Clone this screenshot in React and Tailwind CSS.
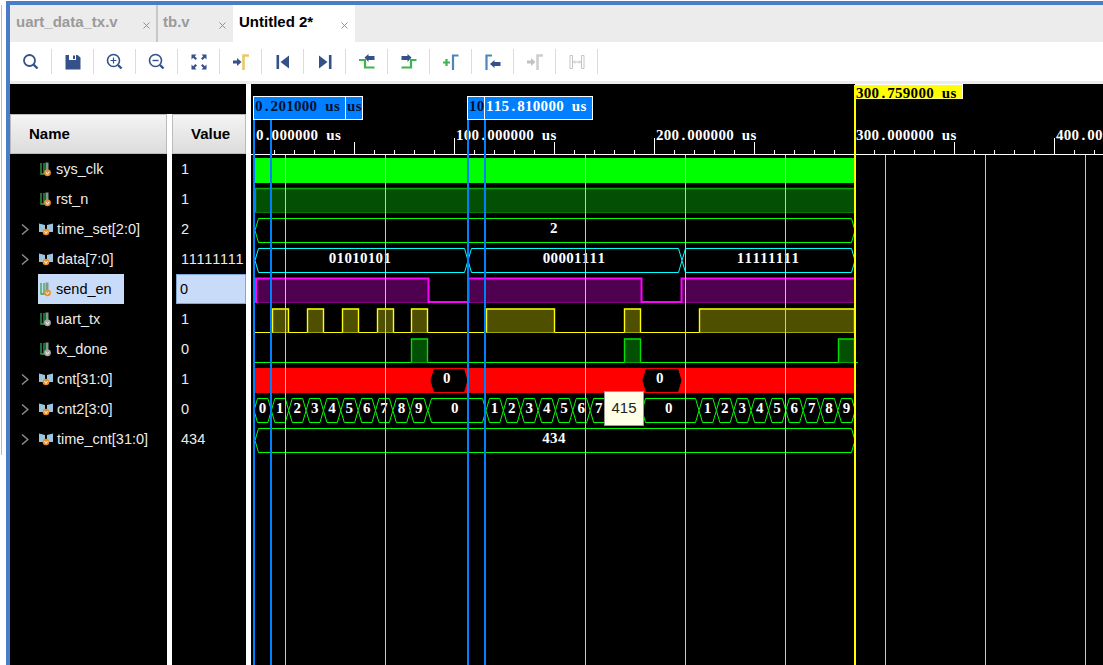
import { X } from 'lucide-react';

const NAVY = '#34518a';
const GREEN = '#3cb54a';

const ZoomFit = () => (
  <svg width="17" height="17" viewBox="0 0 17 17">
    <circle cx="7.5" cy="7.5" r="5.5" fill="none" stroke={NAVY} strokeWidth="1.8" />
    <path d="M11.5 11.5L15.5 15.5" stroke={NAVY} strokeWidth="2.4" />
  </svg>
);

const Save = () => (
  <svg width="16" height="16" viewBox="0 0 16 16">
    <path d="M0.5 1H12.5L15.5 3.5V15.5H0.5Z" fill={NAVY} />
    <rect x="4" y="1" width="7" height="5" fill="#fff" />
    <rect x="8" y="1.5" width="2" height="3.5" fill={NAVY} />
  </svg>
);

const ZoomIn = () => (
  <svg width="17" height="17" viewBox="0 0 17 17">
    <circle cx="7.5" cy="7.5" r="6" fill="none" stroke={NAVY} strokeWidth="1.6" />
    <path d="M4.5 7.5H10.5M7.5 4.5V10.5" stroke={NAVY} strokeWidth="1.2" />
    <path d="M12 12L15.5 15.5" stroke={NAVY} strokeWidth="2.4" />
  </svg>
);

const ZoomOut = () => (
  <svg width="17" height="17" viewBox="0 0 17 17">
    <circle cx="7.5" cy="7.5" r="6" fill="none" stroke={NAVY} strokeWidth="1.6" />
    <path d="M4.5 7.5H10.5" stroke={NAVY} strokeWidth="1.4" />
    <path d="M12 12L15.5 15.5" stroke={NAVY} strokeWidth="2.4" />
  </svg>
);

const FullScreen = () => (
  <svg width="16" height="16" viewBox="0 0 16 16" fill={NAVY}>
    <path d="M0.5 0.5H5.5L3.8 2.2L6 4.4L4.4 6L2.2 3.8L0.5 5.5Z" />
    <path d="M15.5 0.5H10.5L12.2 2.2L10 4.4L11.6 6L13.8 3.8L15.5 5.5Z" />
    <path d="M0.5 15.5H5.5L3.8 13.8L6 11.6L4.4 10L2.2 12.2L0.5 10.5Z" />
    <path d="M15.5 15.5H10.5L12.2 13.8L10 11.6L11.6 10L13.8 12.2L15.5 10.5Z" />
  </svg>
);

const GoToCursor = ({ arrow = NAVY, bar = '#e8c968' }) => (
  <svg width="16" height="16" viewBox="0 0 16 16">
    <path d="M0 6.5H4V4L8.5 8L4 12V9.5H0Z" fill={arrow} />
    <path d="M10.5 16V1.5H16" fill="none" stroke={bar} strokeWidth="2.6" />
  </svg>
);

const First = () => (
  <svg width="14" height="16" viewBox="0 0 14 16" fill={NAVY}>
    <rect x="0.5" y="1" width="2.6" height="14" />
    <path d="M13 1.5V14.5L4.5 8Z" />
  </svg>
);

const Last = () => (
  <svg width="14" height="16" viewBox="0 0 14 16" fill={NAVY}>
    <rect x="10.9" y="1" width="2.6" height="14" />
    <path d="M1 1.5V14.5L9.5 8Z" />
  </svg>
);

const PrevEdge = () => (
  <svg width="16" height="16" viewBox="0 0 16 16">
    <path d="M0 6H6V13.5H15.5" fill="none" stroke={GREEN} strokeWidth="2.2" />
    <path d="M5.5 3.5L9.5 0V2H15.5V6H9.5V8Z" fill={NAVY} />
  </svg>
);

const NextEdge = () => (
  <svg width="16" height="16" viewBox="0 0 16 16">
    <path d="M0.5 13.5H10V6H15.5" fill="none" stroke={GREEN} strokeWidth="2.2" />
    <path d="M10.5 3.5L6.5 0V2H0.5V6H6.5V8Z" fill={NAVY} />
  </svg>
);

const AddMarker = () => (
  <svg width="16" height="16" viewBox="0 0 16 16">
    <path d="M0 8.5H7M3.5 5V12" stroke={GREEN} strokeWidth="2.2" />
    <path d="M10 16V1.5H15.5" fill="none" stroke="#4a86b8" strokeWidth="2.2" />
  </svg>
);

const PrevMarker = () => (
  <svg width="16" height="16" viewBox="0 0 16 16">
    <path d="M1.5 16V1.5H7" fill="none" stroke="#4a86b8" strokeWidth="2.2" />
    <path d="M5 10L9.5 6V8H15.5V12H9.5V14Z" fill={NAVY} />
  </svg>
);

const Swap = () => (
  <svg width="16" height="16" viewBox="0 0 16 16">
    <path d="M1 1.5H3.5V14.5H1ZM12.5 1.5H15V14.5H12.5Z" fill="#fff" stroke="#c4c4c4" />
    <path d="M4.5 8H11.5M6 6.5L4.5 8L6 9.5M10 6.5L11.5 8L10 9.5" fill="none" stroke="#c4c4c4" />
  </svg>
);

const toolIcons = [
  <ZoomFit />,
  <Save />,
  <ZoomIn />,
  <ZoomOut />,
  <FullScreen />,
  <GoToCursor />,
  <First />,
  <Last />,
  <PrevEdge />,
  <NextEdge />,
  <AddMarker />,
  <PrevMarker />,
  <GoToCursor arrow="#c2c2c2" bar="#cfcfcf" />,
  <Swap />,
];

const signals = [
  { name: 'sys_clk', value: '1', type: 'bit' },
  { name: 'rst_n', value: '1', type: 'bit' },
  { name: 'time_set[2:0]', value: '2', type: 'bus' },
  { name: 'data[7:0]', value: '11111111', type: 'bus' },
  { name: 'send_en', value: '0', type: 'bit', selected: true },
  { name: 'uart_tx', value: '1', type: 'bit', output: true },
  { name: 'tx_done', value: '0', type: 'bit', output: true },
  { name: 'cnt[31:0]', value: '1', type: 'bus' },
  { name: 'cnt2[3:0]', value: '0', type: 'bus' },
  { name: 'time_cnt[31:0]', value: '434', type: 'bus' },
];

const BitIcon = ({ output }) => (
  <svg width="12" height="15" viewBox="0 0 12 15" className="shrink-0">
    <path d="M1 1V12H4V1" fill="none" stroke="#2fa84f" strokeWidth="1.3" />
    <rect x="5.5" y="0.5" width="3" height="8" fill="#7f9a8a" />
    <circle cx="7.5" cy="10.8" r="3.4" fill={output ? '#a8a8a8' : '#e8912c'} />
    <path d="M6 9.8L7.5 12.3L9 9.8" fill="none" stroke="#fff" strokeWidth="0.8" />
  </svg>
);

const BusIcon = () => (
  <svg width="14" height="13" viewBox="0 0 14 13" className="shrink-0">
    <path d="M0 0.5L6 2V9H0ZM14 0.5L8 2V9H14Z" fill="#9cc4dc" />
    <circle cx="7" cy="9" r="3.3" fill="#e8912c" />
    <path d="M5.5 8L7 10.5L8.5 8" fill="none" stroke="#fff" strokeWidth="0.8" />
  </svg>
);

const Chevron = () => (
  <svg width="8" height="11" viewBox="0 0 8 11">
    <path d="M1 0.5L6.8 5.5L1 10.5" fill="none" stroke="#8a8a8a" strokeWidth="1.5" />
  </svg>
);

const CELL = 7.8;
const nudge = { '.': 2, s: 1, i: 1, t: 1 };

// half-width bitmap look: every character sits in its own fixed cell
const WaveText = ({ x, y, fill = '#fff', center, children }) => {
  const str = String(children);
  const start = center ? x - (str.length * CELL) / 2 : x;
  const xs = str.split('').map((c, i) => (start + i * CELL + (nudge[c] || 0)).toFixed(1)).join(' ');
  return (
    <text x={xs} y={y} fill={fill} fontSize="15" fontWeight="700" fontFamily="'Liberation Serif', serif">
      {str}
    </text>
  );
};

// one bus value: hexagon between two crossing points
const Hex = ({ x0, x1, top, stroke, inset = 3.5 }) => {
  const bot = top + 24;
  const mid = top + 12;
  return (
    <path
      d={`M${x0} ${mid}L${x0 + inset} ${top}H${x1 - inset}L${x1} ${mid}L${x1 - inset} ${bot}H${x0 + inset}Z`}
      fill="#000"
      stroke={stroke}
      strokeWidth="1"
    />
  );
};

const DigitRun = ({ start, first, count, skip = [] }) => {
  const step = 17.36;
  const items = [];
  for (let i = 0; i < count; i++) {
    const x0 = start + i * step;
    items.push(<Hex key={i} x0={x0} x1={x0 + step} top={398.5} stroke="#00ff00" />);
    if (!skip.includes(i)) {
      items.push(
        <WaveText key={`t${i}`} x={x0 + step / 2} y={413} center>
          {first + i}
        </WaveText>
      );
    }
  }
  return <g>{items}</g>;
};

const Pulses = ({ ranges, top, stroke, fill }) => (
  <g>
    {ranges.map(([x0, x1]) => (
      <g key={x0}>
        <rect x={x0} y={top} width={x1 - x0} height={24} fill={fill} />
        <path d={`M${x0 + 0.5} ${top + 24}V${top + 0.5}H${x1 - 0.5}V${top + 24}`} fill="none" stroke={stroke} strokeWidth="1.4" />
      </g>
    ))}
  </g>
);

const minorTicks = [];
for (let x = 254; x < 1103; x += 20) minorTicks.push(x);

const gridLines = [285, 385, 485, 585, 685, 785, 885, 985, 1085];

const Waves = () => (
  <svg viewBox="251 84 852 581" width="852" height="581" className="block">
    {/* ruler */}
    <path d="M251 154.5H1103" stroke="#fff" />
    {minorTicks.map((x) => {
      const major = (x - 254) % 200 === 0;
      const half = (x - 254) % 100 === 0;
      const top = major ? 138 : half ? 142 : 150;
      return <path key={x} d={`M${x + 0.5} ${top}V154`} stroke="#fff" />;
    })}
    <WaveText x={256} y={140}>0.000000 us</WaveText>
    <WaveText x={456} y={140}>100.000000 us</WaveText>
    <WaveText x={656} y={140}>200.000000 us</WaveText>
    <WaveText x={856} y={140}>300.000000 us</WaveText>
    <WaveText x={1056} y={140}>400.000000 us</WaveText>

    {/* sys_clk, rst_n */}
    <rect x={255} y={158} width={600} height={25} fill="#00ff00" />
    <rect x={255} y={188} width={600} height={25} fill="#034f03" />
    <path d="M255.5 213V188.5H855" fill="none" stroke="#0aa80a" strokeWidth="1.4" />
    <path d="M255 212.5H855" stroke="#047a04" />

    {/* time_set, data */}
    <Hex x0={255} x1={855} top={218.5} stroke="#00ff00" />
    <WaveText x={554} y={233} center>2</WaveText>
    <Hex x0={255} x1={468} top={248.5} stroke="#00ffff" />
    <Hex x0={468} x1={682} top={248.5} stroke="#00ffff" />
    <Hex x0={682} x1={855} top={248.5} stroke="#00ffff" />
    <WaveText x={360} y={263} center>01010101</WaveText>
    <WaveText x={574} y={263} center>00001111</WaveText>
    <WaveText x={768} y={263} center>11111111</WaveText>

    {/* send_en */}
    <rect x={256} y={279} width={172} height={24} fill="#4f004f" />
    <rect x={469} y={279} width={172} height={24} fill="#4f004f" />
    <rect x={682} y={279} width={173} height={24} fill="#4f004f" />
    <path d="M256 302.5H855" stroke="#800080" />
    <path
      d="M256 303V278.5H428.5V302H468.5V278.5H641.5V302H681.5V278.5H855"
      fill="none"
      stroke="#ff00ff"
      strokeWidth="2"
    />

    {/* uart_tx */}
    <path d="M255 332.5H855" stroke="#ffff00" />
    <Pulses
      top={308.5}
      stroke="#ffff00"
      fill="#4f4f00"
      ranges={[
        [272, 289],
        [307, 324],
        [342, 359],
        [377, 394],
        [411, 428],
        [486, 555],
        [624, 641],
        [699, 855],
      ]}
    />

    {/* tx_done */}
    <path d="M255 362.5H858" stroke="#00ff00" />
    <Pulses
      top={338.5}
      stroke="#00e000"
      fill="#034f03"
      ranges={[
        [411, 428],
        [624, 641],
        [838, 855],
      ]}
    />

    {/* cnt */}
    <rect x={255} y={368} width={600} height={25} fill="#ff0000" />
    <Hex x0={430} x1={468} top={368.5} stroke="#ff0000" />
    <Hex x0={642} x1={682} top={368.5} stroke="#ff0000" />
    <WaveText x={447} y={383} center>0</WaveText>
    <WaveText x={660} y={383} center>0</WaveText>

    {/* cnt2 */}
    <DigitRun start={254} first={0} count={10} />
    <Hex x0={428} x1={486} top={398.5} stroke="#00ff00" />
    <WaveText x={455} y={413} center>0</WaveText>
    <DigitRun start={486} first={1} count={9} skip={[7, 8]} />
    <Hex x0={642} x1={699} top={398.5} stroke="#00ff00" />
    <WaveText x={669} y={413} center>0</WaveText>
    <DigitRun start={699} first={1} count={9} />

    {/* time_cnt */}
    <Hex x0={255} x1={855} top={428.5} stroke="#00ff00" />
    <WaveText x={554} y={443} center>434</WaveText>

    {gridLines.map((x) => (
      <path key={x} d={`M${x + 0.5} 155V665`} stroke="#c8c8c8" />
    ))}

    {/* cursors and markers */}
    <rect x={855} y={84} width={108} height={15} fill="#fff" />
    <rect x={855} y={85} width={107} height={13.5} fill="#ffff00" />
    <WaveText x={856} y={98} fill="#000">300.759000 us</WaveText>
    <rect x={854} y={85} width={2} height={580} fill="#ffff00" />

    {[253, 270, 467, 484].map((x) => (
      <rect key={x} x={x} y={119} width={2} height={546} fill="#0080ff" />
    ))}
    <rect x={253.5} y={96.5} width={109} height={23} fill="#0080ff" stroke="#fff" />
    <path d="M345.5 97V119" stroke="#fff" />
    <WaveText x={255} y={111} fill="#001030">0.201000 us</WaveText>
    <WaveText x={347} y={111} fill="#001030">us</WaveText>
    <rect x={467.5} y={96.5} width={125} height={23} fill="#0080ff" stroke="#fff" />
    <path d="M484.5 97V119" stroke="#fff" />
    <WaveText x={469} y={111} fill="#001030">10</WaveText>
    <WaveText x={486} y={111}>115.810000 us</WaveText>
  </svg>
);

const App = () => {
  return (
    <div className="w-[1103px] h-[665px] flex overflow-hidden bg-white font-['Liberation_Sans',sans-serif] text-[15px]">
      {/* left gutter */}
      <div className="w-[6px] shrink-0 pl-px pt-[5px]">
        <div className="h-[450px] border-l border-[#bdbdbd]"></div>
      </div>

      <div className="flex-1 min-w-0 flex flex-col pt-px">
        <div className="h-[4px] shrink-0 bg-[#4a7cc9]"></div>

        <div className="flex-1 min-h-0 flex">
          <div className="w-[4px] shrink-0 bg-[#4a7cc9]"></div>

          <div className="flex-1 min-w-0 flex flex-col">
            {/* tabs */}
            <div className="h-[37px] shrink-0 flex bg-[#ececec] font-bold">
              <div className="w-[148px] pl-[6px] flex items-center justify-between pr-[4px] text-[#9a9a9a] border-r-2 border-[#c8c8c8]">
                <span className="-mt-[3px]">uart_data_tx.v</span>
                <X size={11} strokeWidth={2} className="mt-[4px] text-[#8a8a8a]" />
              </div>
              <div className="w-[75px] pl-[5px] flex items-center justify-between pr-[5px] text-[#9a9a9a]">
                <span className="-mt-[3px]">tb.v</span>
                <X size={11} strokeWidth={2} className="mt-[4px] text-[#8a8a8a]" />
              </div>
              <div className="w-[122px] pl-[6px] flex items-center justify-between pr-[5px] bg-white text-black">
                <span className="-mt-[3px]">Untitled 2*</span>
                <X size={11} strokeWidth={2} className="mt-[4px] text-[#8a8a8a]" />
              </div>
            </div>

            {/* toolbar */}
            <div className="h-[39px] shrink-0 flex items-center bg-white">
              {toolIcons.map((icon, i) => (
                <div key={i} className="w-[42px] h-[25px] flex items-center justify-center border-r border-[#dcdcdc]">
                  {icon}
                </div>
              ))}
            </div>
            <div className="h-[3px] shrink-0 bg-[#ececec]"></div>

            {/* wave window */}
            <div className="flex-1 min-h-0 flex relative">
              <div className="w-[236px] shrink-0 flex flex-col bg-black">
                <div className="h-[30px] shrink-0"></div>
                <div className="flex-1 min-h-0 flex gap-[5px] bg-white">
                  <div className="w-[157px] flex flex-col bg-black">
                    <div className="h-[40px] shrink-0 flex items-center pl-[18px] font-bold text-black border border-[#bbb] bg-gradient-to-b from-[#f4f4f4] to-[#dcdcdc]">
                      Name
                    </div>
                    {signals.map((s) => (
                      <div key={s.name} className="h-[30px] shrink-0 flex items-center text-[14.5px]">
                        <div className="w-[28px] shrink-0 flex justify-end pr-[9px]">
                          {s.type === 'bus' && <Chevron />}
                        </div>
                        <div className={`h-full flex items-center gap-[4px] pr-[12px] ${s.selected ? 'bg-[#c8dcfa] text-black' : 'text-[#ececec]'} ${s.type === 'bit' ? 'pl-[2px]' : 'pl-px'}`}>
                          {s.type === 'bus' ? <BusIcon /> : <BitIcon output={s.output} />}
                          <span className="pt-px">{s.name}</span>
                        </div>
                      </div>
                    ))}
                  </div>
                  <div className="w-[74px] flex flex-col bg-black">
                    <div className="h-[40px] shrink-0 flex items-center pl-[18px] font-bold text-black border border-[#bbb] bg-gradient-to-b from-[#f4f4f4] to-[#dcdcdc]">
                      Value
                    </div>
                    {signals.map((s) => (
                      <div
                        key={s.name}
                        className={`h-[30px] shrink-0 flex items-center pt-px whitespace-nowrap overflow-hidden text-[14.5px] ${s.value.length > 3 ? 'tracking-[0.8px]' : ''} ${s.selected ? 'ml-[4px] pl-[3px] bg-[#c8dcfa] text-black border border-[#7fa6d8]' : 'pl-[9px] text-[#ececec]'}`}
                      >
                        {s.value}
                      </div>
                    ))}
                  </div>
                </div>
              </div>
              <div className="w-[5px] shrink-0 bg-white"></div>
              <div className="flex-1 min-w-0 bg-black">
                <Waves />
              </div>

              {/* hover tooltip */}
              <div className="absolute left-[594px] top-[307px] w-[40px] h-[35px] flex items-center justify-center bg-[#ffffe8] border border-[#9a9a9a] text-[#222]">
                415
              </div>
            </div>
          </div>
        </div>
      </div>
    </div>
  );
};

export default App;
